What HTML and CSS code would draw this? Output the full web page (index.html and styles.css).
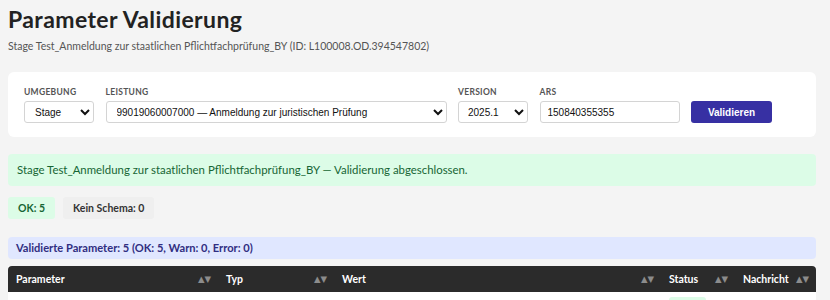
FILE: index.html
```html
<!DOCTYPE html>
<html lang="de">
<head>
  <meta charset="UTF-8">
  <title>Parameter Validierung</title>
  <link rel="stylesheet" href="styles.css">
</head>
<body>
  <div class="page">
    <h1>Parameter Validierung</h1>
    <div class="subtitle">Stage Test_Anmeldung zur staatlichen Pflichtfachprüfung_BY (ID: L100008.OD.394547802)</div>

    <div class="card">
      <div class="field f-env">
        <label>Umgebung</label>
        <select><option>Stage</option></select>
      </div>
      <div class="field f-service">
        <label>Leistung</label>
        <select><option>99019060007000 — Anmeldung zur juristischen Prüfung</option></select>
      </div>
      <div class="field f-version">
        <label>Version</label>
        <select><option>2025.1</option></select>
      </div>
      <div class="field f-ars">
        <label>ARS</label>
        <input type="text" value="150840355355">
      </div>
      <button class="btn">Validieren</button>
    </div>

    <div class="alert">Stage Test_Anmeldung zur staatlichen Pflichtfachprüfung_BY — Validierung abgeschlossen.</div>

    <div class="badges">
      <span class="badge ok">OK: 5</span>
      <span class="badge none">Kein Schema: 0</span>
    </div>

    <div class="summary">Validierte Parameter: 5 (OK: 5, Warn: 0, Error: 0)</div>

    <table class="results">
      <thead>
        <tr>
          <th class="c-param">Parameter <span class="sort">▲▼</span></th>
          <th class="c-type">Typ <span class="sort">▲▼</span></th>
          <th class="c-value">Wert <span class="sort">▲▼</span></th>
          <th class="c-status">Status <span class="sort">▲▼</span></th>
          <th class="c-msg">Nachricht <span class="sort">▲▼</span></th>
        </tr>
      </thead>
      <tbody>
        <tr>
          <td></td>
          <td></td>
          <td></td>
          <td><span class="status"></span></td>
          <td></td>
        </tr>
      </tbody>
    </table>
  </div>
</body>
</html>
```

FILE: styles.css
```css
body {
  font-family: Lato, "Noto Sans", sans-serif;
  background: #f4f4f4;
  color: #222;
  margin: 0;
}

.page {
  width: 808px;
  padding: 0 8px;
}

h1 {
  font-size: 23px;
  font-weight: 700;
  letter-spacing: 0.4px;
  margin: 0;
  padding-top: 5px;
  line-height: 28px;
  color: #222;
}

.subtitle {
  font-size: 10.5px;
  color: #555;
  margin-top: 6px;
  line-height: 14px;
}

.card {
  background: white;
  border-radius: 6px;
  margin-top: 19px;
  padding: 15px 16px 14px;
  display: flex;
  align-items: flex-end;
  gap: 11.5px;
}

.field label {
  display: block;
  font-size: 8.5px;
  font-weight: 700;
  letter-spacing: 0.3px;
  text-transform: uppercase;
  color: #555;
  margin-bottom: 4px;
  line-height: 10px;
}

.field select,
.field input {
  font-family: "Liberation Sans", Arial, sans-serif;
  font-size: 10px;
  height: 22px;
  border: 1px solid #d4d4d4;
  border-radius: 3px;
  background: white;
  color: #111;
  box-sizing: border-box;
  display: block;
}

.f-env select { width: 70px; padding-left: 6px; }
.f-service select { width: 341px; padding-left: 6px; }
.f-version select { width: 70px; padding-left: 5px; }
.f-ars input { width: 140px; padding-left: 7px; }

.btn {
  font-family: "Liberation Sans", Arial, sans-serif;
  font-weight: 700;
  font-size: 10px;
  color: white;
  background: #3730a3;
  border: none;
  border-radius: 3px;
  height: 22px;
  width: 81px;
}

.alert {
  margin-top: 17px;
  background: #dcfce7;
  color: #166534;
  font-size: 11.4px;
  border-radius: 4px;
  padding: 8px 9px;
  line-height: 16px;
}

.badges {
  display: flex;
  gap: 8px;
  margin-top: 11px;
}

.badge {
  font-size: 10.5px;
  font-weight: 700;
  padding: 4px 10px;
  border-radius: 3px;
  line-height: 14px;
}

.badge.ok {
  background: #dcfce7;
  color: #166534;
}

.badge.none {
  background: #efefef;
  color: #333;
}

.summary {
  margin-top: 18px;
  background: #e0e7ff;
  color: #312e81;
  font-size: 11.1px;
  font-weight: 700;
  border-radius: 4px;
  padding: 4px 8px;
  line-height: 14px;
}

.results {
  margin-top: 7px;
  width: 808px;
  border-collapse: separate;
  border-spacing: 0;
  background: white;
  table-layout: fixed;
}

.results th {
  background: #2b2b2b;
  color: white;
  font-size: 10.5px;
  font-weight: 700;
  text-align: left;
  padding: 5px 7px 5px 8px;
  line-height: 16px;
  white-space: nowrap;
}

.results th:first-child { border-top-left-radius: 4px; }
.results th:last-child { border-top-right-radius: 4px; }

.sort {
  float: right;
  color: #8c8c8c;
  font-family: "DejaVu Sans", sans-serif;
  font-size: 8.5px;
  line-height: 16px;
}

.c-param { width: 195px; }
.c-type { width: 101px; }
.c-value { width: 312px; }
.c-status { width: 59px; }

.results td {
  padding: 0 8px;
  height: 10px;
  vertical-align: top;
}

.status {
  display: block;
  background: #dcfce7;
  width: 37px;
  height: 8px;
  margin-top: 5px;
  border-radius: 3px 3px 0 0;
}
```
